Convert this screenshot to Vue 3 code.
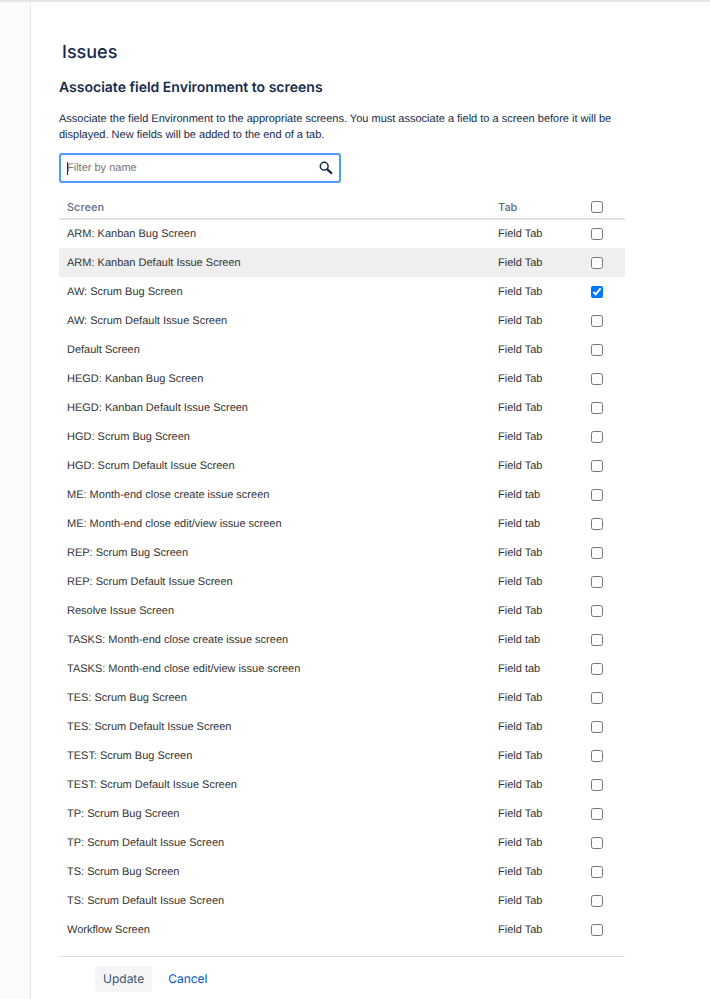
<script setup>
import { ref, computed, onMounted } from "vue";

const filter = ref("");
const filterInput = ref(null);

const names = [
  "ARM: Kanban Bug Screen",
  "ARM: Kanban Default Issue Screen",
  "AW: Scrum Bug Screen",
  "AW: Scrum Default Issue Screen",
  "Default Screen",
  "HEGD: Kanban Bug Screen",
  "HEGD: Kanban Default Issue Screen",
  "HGD: Scrum Bug Screen",
  "HGD: Scrum Default Issue Screen",
  "ME: Month-end close create issue screen",
  "ME: Month-end close edit/view issue screen",
  "REP: Scrum Bug Screen",
  "REP: Scrum Default Issue Screen",
  "Resolve Issue Screen",
  "TASKS: Month-end close create issue screen",
  "TASKS: Month-end close edit/view issue screen",
  "TES: Scrum Bug Screen",
  "TES: Scrum Default Issue Screen",
  "TEST: Scrum Bug Screen",
  "TEST: Scrum Default Issue Screen",
  "TP: Scrum Bug Screen",
  "TP: Scrum Default Issue Screen",
  "TS: Scrum Bug Screen",
  "TS: Scrum Default Issue Screen",
  "Workflow Screen",
];

const screens = ref(
  names.map((name, index) => ({
    id: index + 1,
    name,
    tab: name.includes("Month-end") ? "Field tab" : "Field Tab",
    checked: name === "AW: Scrum Bug Screen",
  }))
);
const activeId = ref(2);

const visibleScreens = computed(() =>
  screens.value.filter((s) =>
    s.name.toLowerCase().includes(filter.value.trim().toLowerCase())
  )
);

const allChecked = computed({
  get: () => screens.value.every((s) => s.checked),
  set: (value) => screens.value.forEach((s) => (s.checked = value)),
});

onMounted(() => filterInput.value?.focus());
</script>

<template>
  <div class="page">
    <aside class="sidebar"></aside>
    <main class="content">
      <h1>Issues</h1>
      <h2>Associate field Environment to screens</h2>
      <p class="description">
        Associate the field Environment to the appropriate screens. You must
        associate a field to a screen before it will be displayed. New fields
        will be added to the end of a tab.
      </p>
      <form @submit.prevent>
        <label class="filter" :class="{ empty: !filter }">
          <input
            ref="filterInput"
            v-model="filter"
            type="text"
            placeholder="Filter by name"
            aria-label="Filter by name"
          />
          <svg viewBox="0 0 14 14" aria-hidden="true">
            <circle cx="5.2" cy="5.2" r="3.9" fill="none" stroke="currentColor" stroke-width="1.5" />
            <path d="M8.4 8.4l3.8 3.6" fill="none" stroke="currentColor" stroke-width="2.4" stroke-linecap="round" />
          </svg>
        </label>
        <table>
          <thead>
            <tr>
              <th scope="col">Screen</th>
              <th scope="col" class="tab">Tab</th>
              <th scope="col" class="check">
                <input v-model="allChecked" type="checkbox" aria-label="Select all screens" />
              </th>
            </tr>
          </thead>
          <tbody>
            <tr
              v-for="screen in visibleScreens"
              :key="screen.id"
              :class="{ active: screen.id === activeId }"
              @mouseenter="activeId = screen.id"
            >
              <td><label :for="`screen-${screen.id}`">{{ screen.name }}</label></td>
              <td>{{ screen.tab }}</td>
              <td class="check">
                <input :id="`screen-${screen.id}`" v-model="screen.checked" type="checkbox" />
              </td>
            </tr>
          </tbody>
        </table>
        <div class="buttons">
          <button type="submit">Update</button>
          <a href="#">Cancel</a>
        </div>
      </form>
    </main>
  </div>
</template>

<style>
body {
  margin: 0;
  background: #fff;
}
</style>

<style scoped>
.page {
  display: flex;
  box-sizing: border-box;
  min-height: 100vh;
  border-top: 2px solid #e4e7e8;
  font-family: "Liberation Sans", Arial, sans-serif;
  font-size: 11px;
  text-rendering: geometricPrecision;
  color: #172b4d;
}
.sidebar {
  flex: 0 0 30px;
  background: #fafbfc;
  border-right: 1px solid #e4e6ea;
}
.content {
  flex: 1;
  padding: 39px 85px 0 28px;
}
h1,
h2,
th,
.buttons {
  font-family: Inter, "Liberation Sans", sans-serif;
}
h1 {
  margin: 0 0 13px;
  padding-left: 3px;
  font-size: 18px;
  font-weight: 500;
  line-height: 24px;
}
h2 {
  margin: 0 0 13px;
  font-size: 14px;
  font-weight: 600;
  line-height: 20px;
}
.description {
  margin: 0 0 10px;
  line-height: 16px;
}
.filter {
  display: flex;
  align-items: center;
  box-sizing: border-box;
  width: 282px;
  max-width: 100%;
  height: 30px;
  padding: 0 6px;
  border: 2px solid #4c9aff;
  border-radius: 3px;
}
/* steady caret while nothing is typed */
.filter.empty::before {
  content: "";
  width: 1px;
  height: 13px;
  margin-right: -1px;
  background: #172b4d;
}
.filter.empty input {
  caret-color: transparent;
}
.filter input {
  flex: 1;
  min-width: 0;
  padding: 0;
  border: none;
  outline: none;
  background: none;
  font: inherit;
  text-rendering: inherit;
  color: inherit;
}
.filter input::placeholder {
  color: #757575;
}
.filter svg {
  width: 14px;
  height: 14px;
}
table {
  width: 100%;
  margin-top: 12px;
  border-collapse: collapse;
  color: #333;
}
th,
td {
  box-sizing: border-box;
  height: 29px;
  padding: 0 8px;
  line-height: 16px;
  text-align: left;
  vertical-align: middle;
}
th {
  height: 24px;
  border-bottom: 2px solid #dfe1e6;
  font-weight: 500;
  color: #5e6c84;
}
.tab {
  width: 78px;
}
.check {
  width: 57px;
  text-align: center;
}
.check input {
  display: block;
  width: 12px;
  height: 12px;
  margin: 0 auto;
}
.active {
  background: #efefef;
}
.buttons {
  display: flex;
  align-items: center;
  gap: 8px;
  margin-top: 12px;
  padding: 9px 0 7px 36px;
  border-top: 1px solid #dfe1e5;
}
.buttons button,
.buttons a {
  padding: 0 8px;
  border: none;
  border-radius: 3px;
  font-family: inherit;
  font-size: 12px;
  line-height: 26px;
  text-rendering: inherit;
}
.buttons button {
  background: #f4f5f7;
  color: #42526e;
}
.buttons a {
  color: #0052cc;
  text-decoration: none;
}
</style>
